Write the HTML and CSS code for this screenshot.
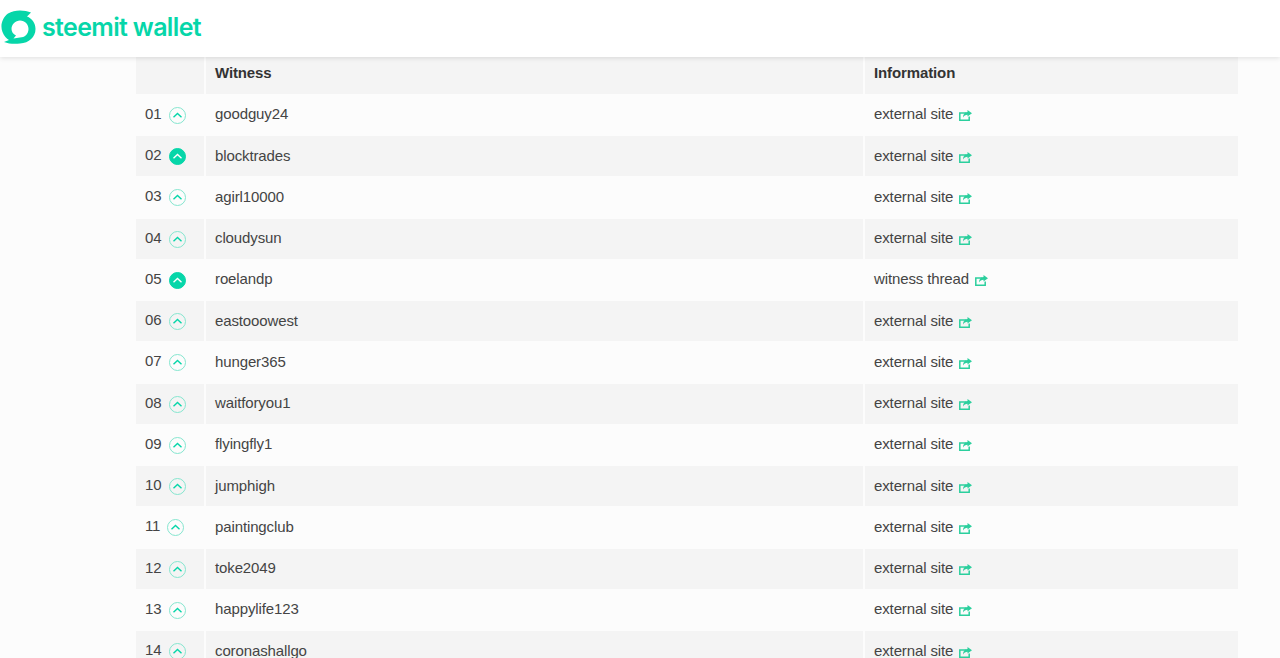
FILE: index.html
```html
<!DOCTYPE html>
<html lang="en">
<head>
    <meta charset="UTF-8">
    <title>Witnesses - steemit wallet</title>
    <link rel="stylesheet" href="styles.css">
</head>
<body>
    <svg class="defs" width="0" height="0">
        <symbol id="vote" viewBox="0 0 17 17">
            <path d="M4.5 10.2 L8.5 6.4 L12.5 10.2" fill="none" stroke="currentColor" stroke-width="1.4"/>
        </symbol>
        <symbol id="ext" viewBox="0 0 13 11">
            <path d="M7.5 3 H0.8 V10.2 H10.2 V6.5" fill="none" stroke="currentColor" stroke-width="1.5"/>
            <path d="M8.5 0 L13 3.3 L8.5 6.6 V4.8 C6.5 4.8 5 5.6 4 7.6 C4 4.6 5.8 2.2 8.5 2 Z" fill="currentColor"/>
        </symbol>
    </svg>
    <header class="topbar">
        <svg class="logo" viewBox="0 0 36 36" width="36" height="36">
            <path fill="#06d6a9" fill-rule="evenodd" d="M30 2.5 C24 0 14 -1 7 3.5 C1 8 -1 16 1.5 22 C3 26 5.5 28.5 8 30 L3 32 C8 34 14 34 19 33.5 C28 33 34.5 27 34.5 19 C34.5 13 31 8.5 26 6.5 Z M19 10.5 C24 10.5 27.5 14.5 27.5 19 C27.5 24 23.5 27.5 19 27.5 L12.5 28.5 L15 25.5 C12 24 10.5 21.5 10.5 19 C10.5 14.5 14.5 10.5 19 10.5 Z"/>
        </svg>
        <span class="wordmark">steemit wallet</span>
    </header>
    <main class="page">
        <table class="witnesses">
            <thead>
                <tr><th class="rank"></th><th class="name">Witness</th><th>Information</th></tr>
            </thead>
            <tbody>
                <tr><td class="rank">01 <span class="vote"><svg><use href="#vote"/></svg></span></td><td class="name">goodguy24</td><td>external site <svg class="ext"><use href="#ext"/></svg></td></tr>
                <tr><td class="rank">02 <span class="vote voted"><svg><use href="#vote"/></svg></span></td><td class="name">blocktrades</td><td>external site <svg class="ext"><use href="#ext"/></svg></td></tr>
                <tr><td class="rank">03 <span class="vote"><svg><use href="#vote"/></svg></span></td><td class="name">agirl10000</td><td>external site <svg class="ext"><use href="#ext"/></svg></td></tr>
                <tr><td class="rank">04 <span class="vote"><svg><use href="#vote"/></svg></span></td><td class="name">cloudysun</td><td>external site <svg class="ext"><use href="#ext"/></svg></td></tr>
                <tr><td class="rank">05 <span class="vote voted"><svg><use href="#vote"/></svg></span></td><td class="name">roelandp</td><td>witness thread <svg class="ext"><use href="#ext"/></svg></td></tr>
                <tr><td class="rank">06 <span class="vote"><svg><use href="#vote"/></svg></span></td><td class="name">eastooowest</td><td>external site <svg class="ext"><use href="#ext"/></svg></td></tr>
                <tr><td class="rank">07 <span class="vote"><svg><use href="#vote"/></svg></span></td><td class="name">hunger365</td><td>external site <svg class="ext"><use href="#ext"/></svg></td></tr>
                <tr><td class="rank">08 <span class="vote"><svg><use href="#vote"/></svg></span></td><td class="name">waitforyou1</td><td>external site <svg class="ext"><use href="#ext"/></svg></td></tr>
                <tr><td class="rank">09 <span class="vote"><svg><use href="#vote"/></svg></span></td><td class="name">flyingfly1</td><td>external site <svg class="ext"><use href="#ext"/></svg></td></tr>
                <tr><td class="rank">10 <span class="vote"><svg><use href="#vote"/></svg></span></td><td class="name">jumphigh</td><td>external site <svg class="ext"><use href="#ext"/></svg></td></tr>
                <tr><td class="rank">11 <span class="vote"><svg><use href="#vote"/></svg></span></td><td class="name">paintingclub</td><td>external site <svg class="ext"><use href="#ext"/></svg></td></tr>
                <tr><td class="rank">12 <span class="vote"><svg><use href="#vote"/></svg></span></td><td class="name">toke2049</td><td>external site <svg class="ext"><use href="#ext"/></svg></td></tr>
                <tr><td class="rank">13 <span class="vote"><svg><use href="#vote"/></svg></span></td><td class="name">happylife123</td><td>external site <svg class="ext"><use href="#ext"/></svg></td></tr>
                <tr><td class="rank">14 <span class="vote"><svg><use href="#vote"/></svg></span></td><td class="name">coronashallgo</td><td>external site <svg class="ext"><use href="#ext"/></svg></td></tr>
            </tbody>
        </table>
    </main>
</body>
</html>
```

FILE: styles.css
```css
*{margin: 0; padding: 0; box-sizing: border-box}
html,body{ height: 100%; overflow: hidden; }
body{ background: #fcfcfc; color: #444; font-family: "Liberation Sans", Arial, sans-serif; font-size: 15px; letter-spacing: -.12px; }
.defs{ display: block; height: 0; }

.topbar{ display: flex; align-items: center; height: 57px; padding: 0 0 2px 1px; background: #fff; box-shadow: 0 1px 5px rgba(0,0,0,.12); position: relative; z-index: 2; }
.logo{ flex: none; }
.wordmark{ margin: -2px 0 0 5px; color: #06d6a9; font-family: Inter, sans-serif; font-size: 25px; font-weight: 600; letter-spacing: -.65px; }

.page{ padding: 0 41px 0 136px; }
.witnesses{ width: 1102px; border-collapse: collapse; table-layout: fixed; }
.witnesses th,.witnesses td{ padding: 0 9px; text-align: left; vertical-align: middle; border-left: 2px solid #fcfcfc; }
.witnesses th:first-child,.witnesses td:first-child{ border-left: 0; }
.witnesses th{ height: 37.3px; padding-bottom: 5px; background: #f4f4f4; color: #333; font-weight: bold; }
.witnesses td{ height: 41.25px; padding-bottom: 2px; border-top: 1px solid #fcfcfc; }
.witnesses td.rank{ padding-bottom: 1px; }
.witnesses tbody tr:nth-child(even) td{ background: #f4f4f4; }
.rank{ width: 69px; white-space: nowrap; }
.name{ width: 659px; }

.vote{ display: inline-block; width: 17px; height: 17px; margin-left: 3px; border: 1px solid #85e6cf; border-radius: 50%; color: #06d6a9; vertical-align: -5px; }
.vote svg{ display: block; width: 17px; height: 17px; margin: -1px; }
.voted{ background: #06d6a9; border-color: #06d6a9; color: #fff; }
.ext{ width: 13px; height: 11px; margin-left: 2px; color: #2bcf9d; vertical-align: -2px; }
```
